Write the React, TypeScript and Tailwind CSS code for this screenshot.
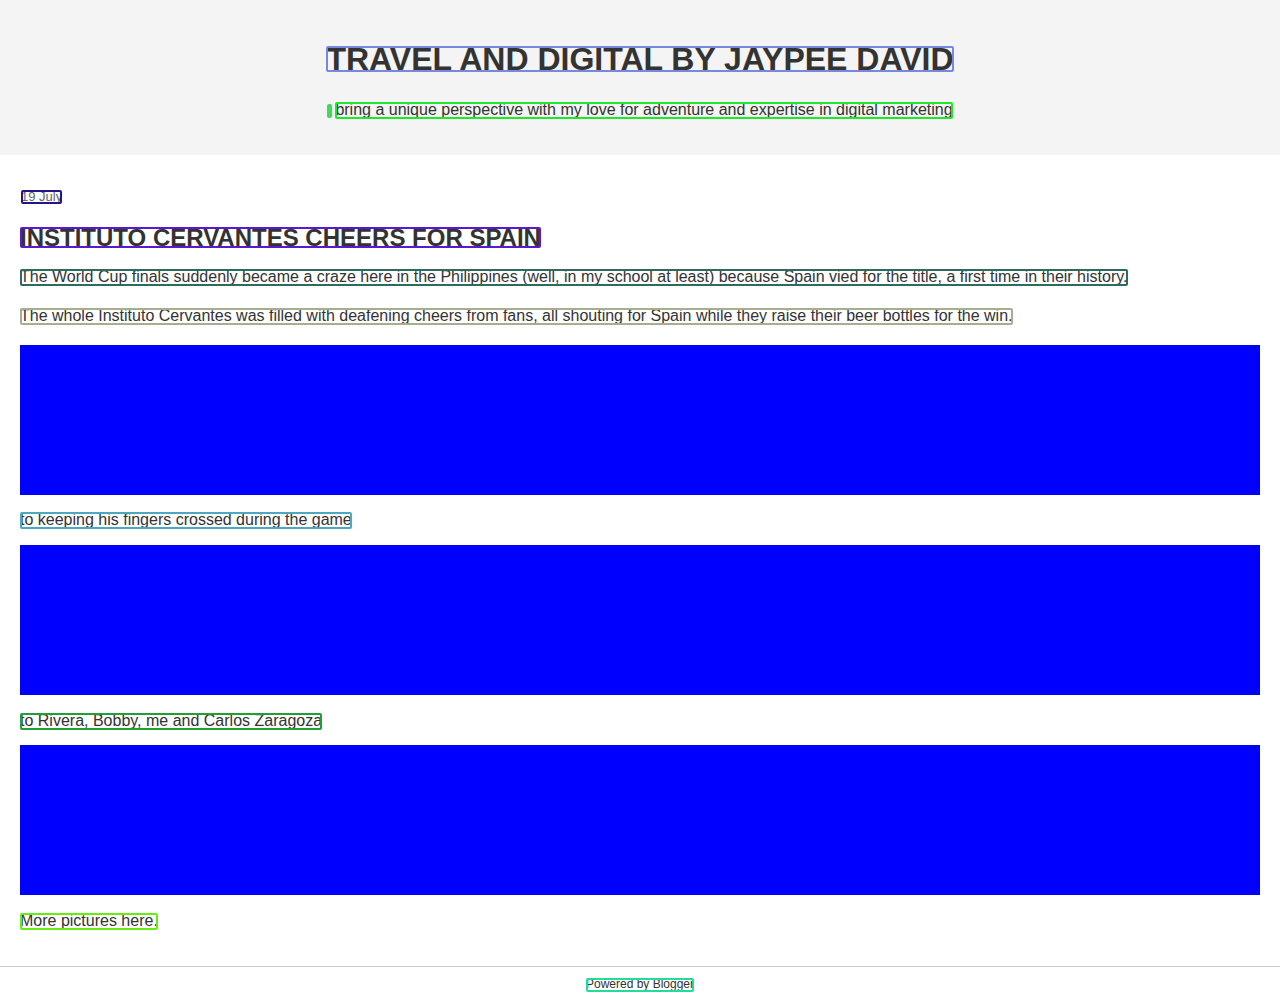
import type { ReactNode } from "react";

// outline drawn on top of a text run, as in the reference
function Marked({ color, children, className = "", box = "inset-0" }: { color: string; children: ReactNode; className?: string; box?: string }) {
  return (
    <span className={`relative inline-block ${className}`}>
      {children}
      <span className={`pointer-events-none absolute inset-x-0 rounded-[2px] border-2 ${box} ${color}`} />
    </span>
  );
}

function Photo() {
  return <div className="h-[150px] w-full bg-[#0000ff]" />;
}

const shift1 = "top-[1px] -bottom-[1px]";

export default function App() {
  return (
    <div className="min-h-screen bg-white font-['Liberation_Sans',Arial,sans-serif] text-[#333]">
      <header className="flex h-[155px] flex-col items-center bg-[#f4f4f4] pt-[46px]">
        <h1 className="text-[32px] font-bold leading-[26px]">
          <Marked box="top-0 bottom-0" color="border-[#7788e0]">TRAVEL AND DIGITAL BY JAYPEE DAVID</Marked>
        </h1>
        <p className="mt-[29px] flex items-center gap-[3px] text-[16px] leading-[17px]">
          <span className="mt-[2px] h-[14px] w-[5px] rounded-[2px] bg-[#3ddc55]" />
          <Marked box={shift1} color="border-[#1ee82a]">bring a unique perspective with my love for adventure and expertise in digital marketing</Marked>
        </p>
      </header>

      <main className="px-5 pt-[35px] pb-[37px]">
        <div className="text-[13px] leading-[14px] text-[#666]">
          <Marked color="border-[#24158a]" className="ml-[1px]">19 July</Marked>
        </div>
        <h2 className="mt-[23px] text-[24px] font-bold leading-[21px]">
          <Marked box="top-0 bottom-0" color="border-[#5a18d0]">INSTITUTO CERVANTES CHEERS FOR SPAIN</Marked>
        </h2>
        <p className="mt-[20px] text-[16px] leading-[17px]">
          <Marked box={shift1} color="border-[#2d6b5f]">The World Cup finals suddenly became a craze here in the Philippines (well, in my school at least) because Spain vied for the title, a first time in their history.</Marked>
        </p>
        <p className="mt-[22px] text-[16px] leading-[17px]">
          <Marked box={shift1} color="border-[#a6ae92]">The whole Instituto Cervantes was filled with deafening cheers from fans, all shouting for Spain while they raise their beer bottles for the win.</Marked>
        </p>

        <div className="mt-[21px] flex flex-col">
          <Photo />
          <p className="mt-[16px] mb-[17px] text-[16px] leading-[17px]">
            <Marked box={shift1} color="border-[#4aa8c0]">to keeping his fingers crossed during the game</Marked>
          </p>
          <Photo />
          <p className="mt-[17px] mb-[16px] text-[16px] leading-[17px]">
            <Marked box={shift1} color="border-[#1fa030]">to Rivera, Bobby, me and Carlos Zaragoza</Marked>
          </p>
          <Photo />
          <p className="mt-[17px] text-[16px] leading-[17px]">
            <Marked box={shift1} color="border-[#66ee11]">More pictures here.</Marked>
          </p>
        </div>
      </main>

      <footer className="flex justify-center border-t border-[#ccc] pt-[10px] text-[12px] leading-[14px]">
        <Marked box={shift1} color="border-[#22dd99]">Powered by Blogger</Marked>
      </footer>
    </div>
  );
}
